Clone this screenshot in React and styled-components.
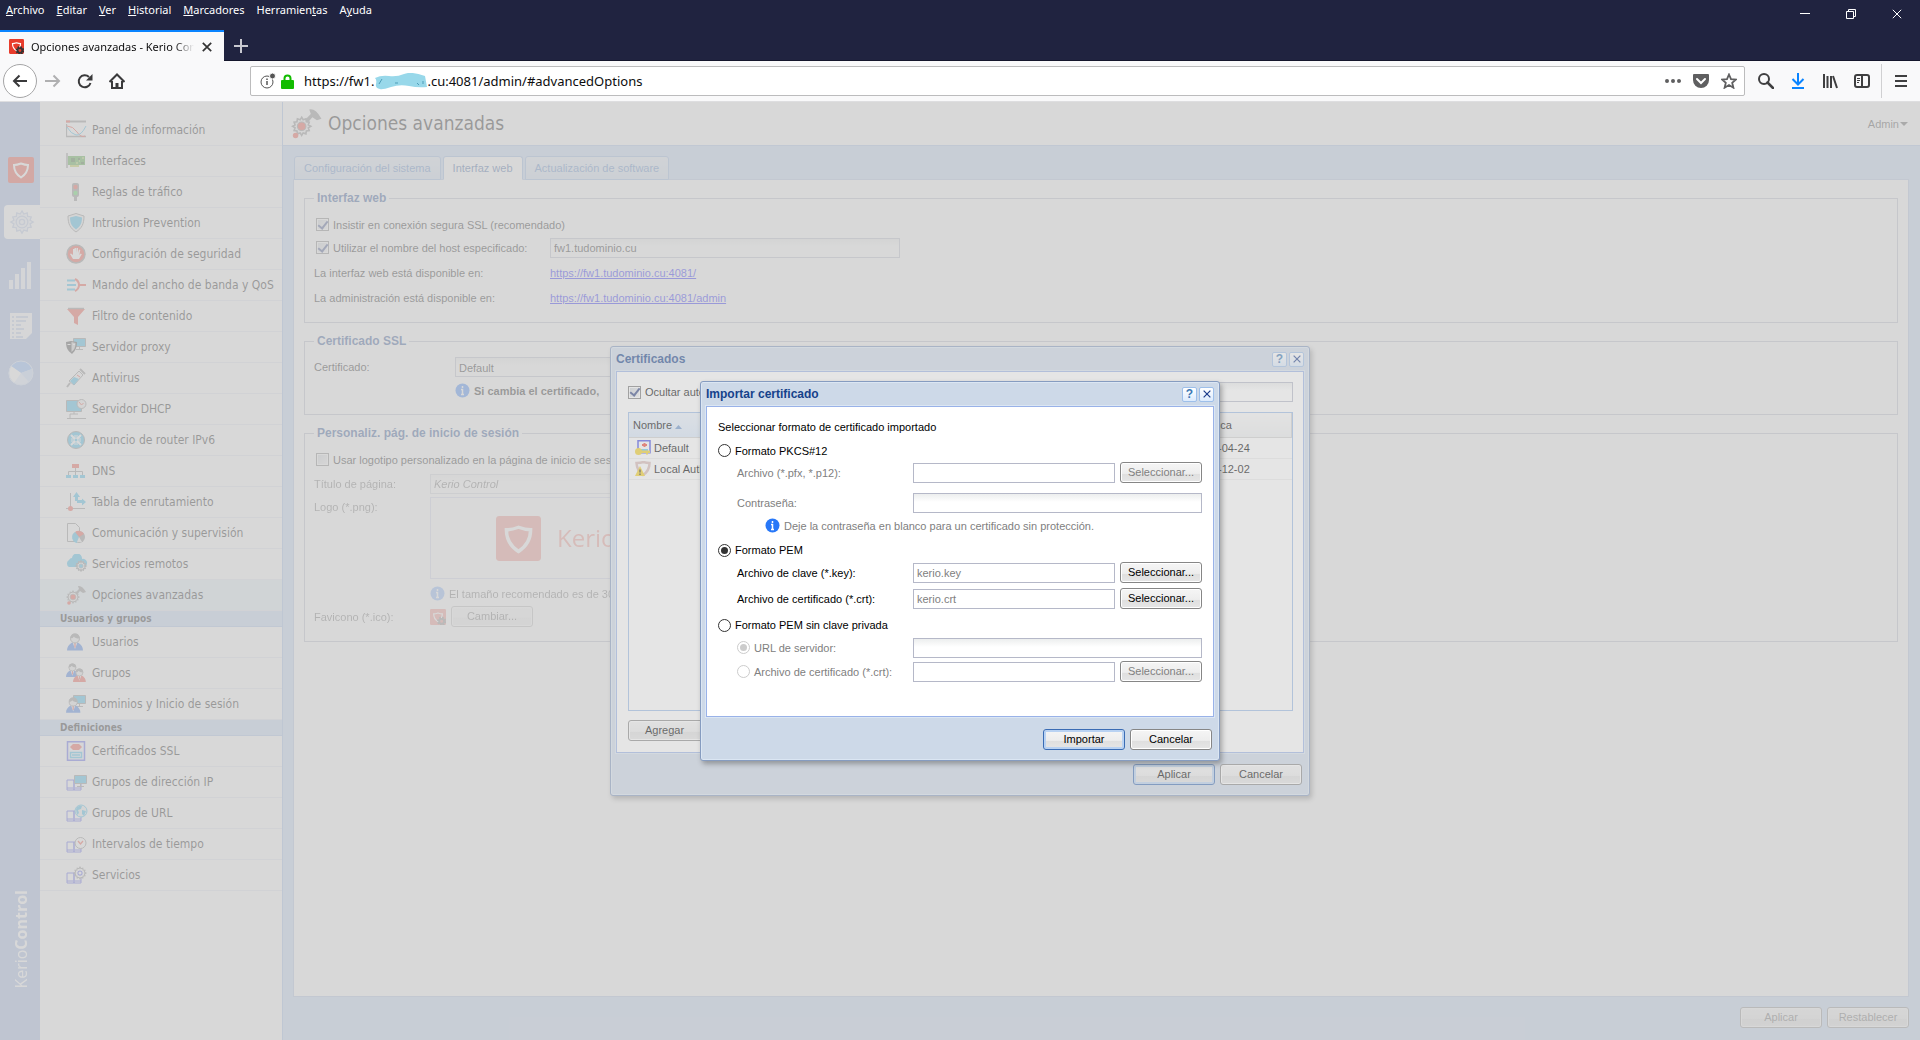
import styled, { createGlobalStyle, css } from 'styled-components'

const UI = `"Liberation Sans", Arial, sans-serif`
const NAV = `"DejaVu Sans Condensed", "DejaVu Sans", sans-serif`
const CHROME = `"Noto Sans", "Open Sans", sans-serif`

const GlobalStyle = createGlobalStyle`
    * { box-sizing: border-box; }
    body { margin: 0; font-family: ${UI}; font-size: 11px; color: #000; }
    button, input, select { font: inherit; color: inherit; margin: 0; }
`

const Window = styled.div`
    display: flex;
    flex-direction: column;
    height: 100vh;
    overflow: hidden;
`

/* browser chrome */

const TitleBar = styled.header`
    background: #202340;
    color: #fff;
    display: flex;
    justify-content: space-between;
    height: 61px;
    font-family: ${CHROME};
    font-size: 11px;
    border-bottom: 1px solid #14162c;
`

const TitleLeft = styled.div`
    display: flex;
    flex-direction: column;
    justify-content: space-between;
`

const MenuBar = styled.nav`
    display: flex;
    gap: 12px;
    padding-left: 6px;
    line-height: 20px;
`

const MenuItem = styled.button`
    background: none;
    border: 0;
    padding: 0;
`

const TabStrip = styled.div`
    display: flex;
    align-items: stretch;
    height: 31px;
    margin-bottom: -1px;
`

const BrowserTab = styled.div`
    background: #f9f9fa;
    color: #0c0c0d;
    border-top: 2px solid #0a84ff;
    width: 224px;
    padding: 0 11px 0 9px;
    display: flex;
    align-items: center;
    gap: 7px;
`

const TabTitle = styled.span`
    flex: 1;
    overflow: hidden;
    white-space: nowrap;
    mask-image: linear-gradient(to right, #000 88%, transparent);
`

const PlainButton = styled.button`
    background: none;
    border: 0;
    padding: 0;
    display: flex;
    align-items: center;
    justify-content: center;
    width: ${p => p.$w || 16}px;
    flex-shrink: 0;
`

const WindowControls = styled.div`
    display: flex;
    height: 28px;
`

const ToolBar = styled.div`
    background: #f9f9fa;
    border-bottom: 1px solid #dedee0;
    display: flex;
    align-items: center;
    height: 41px;
    padding: 0 3px;
`

const BackButton = styled(PlainButton)`
    width: 34px;
    height: 34px;
    border: 1px solid #a5a5a6;
    border-radius: 50%;
    background: #fff;
`

const UrlBar = styled.div`
    display: flex;
    align-items: center;
    flex: 1;
    height: 30px;
    margin-left: 117px;
    padding: 0 1px 0 9px;
    border: 1px solid #bcbcbd;
    border-radius: 2px;
    background: #fff;
`

const UrlText = styled.div`
    display: flex;
    align-items: center;
    flex: 1;
    margin-left: 10px;
    font-family: ${CHROME};
    font-size: 13px;
    color: #0c0c0d;
`

const ToolDivider = styled.span`
    width: 1px;
    height: 34px;
    background: #d0d0d2;
    margin: 0 3px 0 8px;
`

/* application */

const AppArea = styled.div`
    position: relative;
    display: flex;
    flex: 1;
    min-height: 0;
    background: #bfd5f5;
`

const Layer = styled.div`
    position: absolute;
    inset: 0;
    display: flex;
    align-items: center;
    justify-content: center;
    background: ${p => p.$dim ? 'rgba(204, 204, 204, 0.5)' : 'none'};
`

const Rail = styled.aside`
    width: 40px;
    background: #98b2e2;
    display: flex;
    flex-direction: column;
    justify-content: space-between;
`

const RailIcons = styled.div`
    display: flex;
    flex-direction: column;
    padding-top: 43px;
`

const RailButton = styled.button`
    border: 0;
    padding: 0;
    height: ${p => p.$h}px;
    margin-left: 2px;
    display: flex;
    align-items: center;
    justify-content: center;
    background: none;
    ${p => p.$active && css`
        background: #fff;
        border-radius: 4px 0 0 4px;
        height: 34px;
        margin: 10px 0 9px 4px;
    `}
`

const Brand = styled.div`
    writing-mode: vertical-rl;
    transform: rotate(180deg);
    align-self: flex-end;
    font-family: "Open Sans", sans-serif;
    font-size: 16px;
    line-height: 20px;
    color: #fff;
    padding-top: 51px;
    margin-right: 9px;
    b { font-weight: 700; }
`

const SideBar = styled.nav`
    width: 243px;
    background: #fff;
    border-right: 1px solid #99bbe8;
    padding-top: 13px;
    font-family: ${NAV};
    font-size: 12px;
    overflow: hidden;
`

const SideHeading = styled.h3`
    margin: 0;
    height: 16px;
    line-height: 15px;
    padding-left: 20px;
    background: #bfd5f5;
    border-bottom: 1px solid #a3bfe8;
    font-size: 10px;
`

const SideLink = styled.a`
    display: flex;
    align-items: center;
    gap: 4px;
    height: 31px;
    padding-left: 26px;
    border-bottom: 1px solid #e0e6f0;
    color: #000;
    text-decoration: none;
    white-space: nowrap;
    background: ${p => p.$active ? '#dcecf4' : 'none'};
`

const Main = styled.main`
    flex: 1;
    display: flex;
    flex-direction: column;
    min-width: 0;
    color: #000;
`

const PageHeader = styled.div`
    display: flex;
    align-items: center;
    gap: 5px;
    height: 44px;
    background: #fff;
    border-bottom: 1px solid #a3bfe8;
    padding: 0 12px 0 8px;
`

const PageTitle = styled.h1`
    flex: 1;
    margin: 0;
    font-family: ${NAV};
    font-size: 19px;
    line-height: 42px;
    font-weight: normal;
    height: 44px;
`

const AdminMenu = styled(PlainButton)`
    width: auto;
    gap: 1px;
    color: #333;
`

const TabRow = styled.div`
    display: flex;
    gap: 2px;
    padding: 10px 11px 0;
`

const PageTab = styled.button`
    height: 24px;
    padding: 0 9px;
    border: 1px solid #8db2e3;
    border-bottom-color: ${p => p.$active ? '#fff' : '#8db2e3'};
    border-radius: 3px 3px 0 0;
    background: ${p => p.$active ? '#fff' : 'linear-gradient(#dfe9f7, #ccdcf0)'};
    color: ${p => p.$active ? '#2a5599' : '#4a7cc4'};
    margin-bottom: -1px;
    position: relative;
`

const Panel = styled.div`
    flex: 1;
    margin: 0 11px 0 10px;
    padding: 10px;
    background: #fff;
    border: 1px solid #a9bfe0;
`

const FieldSet = styled.fieldset`
    margin: 0 0 10px;
    padding: ${p => p.$top}px 9px ${p => p.$bottom}px;
    border: 1px solid #b5b8c8;
    min-width: 0;
`

const Legend = styled.legend`
    color: #15428b;
    font-weight: bold;
    font-size: 12px;
    line-height: 16px;
    padding: 0 3px;
`

const Line = styled.div`
    display: flex;
    align-items: ${p => p.$start ? 'flex-start' : 'center'};
    min-height: ${p => p.$h || 21}px;
    margin-top: ${p => p.$gap || 0}px;
    padding-left: ${p => p.$indent || 0}px;
    line-height: 20px;
    opacity: ${p => p.$off ? 0.6 : 1};
`

const LabelCell = styled.label`
    display: flex;
    align-items: center;
    gap: 4px;
    width: ${p => p.$w ? `${p.$w}px` : 'auto'};
    flex-shrink: 0;
    white-space: nowrap;
`

const FieldPair = styled.div`
    display: flex;
    align-items: center;
    gap: 5px;
    flex: 1;
    min-width: 0;
`

const Muted = styled.span`
    color: #808080;
`

const Check = styled.input.attrs({ type: 'checkbox' })`
    appearance: none;
    width: 13px;
    height: 13px;
    border: 1px solid #777;
    box-shadow: inset 0 0 0 1px #fff;
    background: linear-gradient(135deg, #c9cfd6, #f6f6f6);
    display: grid;
    place-items: center;
    &:checked::after {
        content: '';
        width: 4px;
        height: 8px;
        border: solid #2b3f80;
        border-width: 0 2px 2px 0;
        transform: rotate(38deg);
        margin-top: -2px;
    }
`

const Radio = styled.input.attrs({ type: 'radio' })`
    appearance: none;
    width: 13px;
    height: 13px;
    border: 1px solid #333;
    border-radius: 50%;
    background: #fff;
    display: grid;
    place-items: center;
    &:checked::after {
        content: '';
        width: 7px;
        height: 7px;
        border-radius: 50%;
        background: #333;
    }
    &:disabled { border-color: #ccc; }
    &:disabled:checked::after { background: #ccc; }
`

const fieldBox = css`
    appearance: none;
    height: 20px;
    border: 1px solid #b5b8c8;
    border-radius: 0;
    padding: 0 3px;
    outline: 0;
    background: ${p => p.$flat ? '#fff' : 'linear-gradient(#eceeee, #fff 8px)'};
`

const TextBox = styled.input`
    ${fieldBox}
    width: ${p => p.$w ? `${p.$w}px` : 'auto'};
    flex: ${p => p.$w ? 'none' : 1};
    min-width: 0;
    color: ${p => p.$muted ? '#808080' : '#000'};
    font-style: ${p => p.$italic ? 'italic' : 'normal'};
`

const SelectBox = styled.select`
    ${fieldBox}
    width: 350px;
    opacity: 1;
`

const Link = styled.a`
    color: #00f;
`

const LogoBox = styled.div`
    width: 350px;
    height: 82px;
    border: 1px solid #b5b8e0;
    display: flex;
    align-items: center;
    gap: 16px;
    padding-left: 65px;
    color: #f04030;
    font-family: "Open Sans", sans-serif;
    font-size: 24px;
`

const Button = styled.button`
    min-width: 82px;
    height: 21px;
    line-height: 17px;
    padding: ${p => p.$menu ? '0 6px 0 16px' : '0 6px'};
    flex-shrink: 0;
    border: 1px solid ${p => p.$primary ? '#3a6cb4' : '#868686'};
    border-radius: 3px;
    background: linear-gradient(#f5f5f5, #ededed 55%, #dfdfdf 58%, #e6e6e6);
    box-shadow: inset 0 0 0 ${p => p.$primary ? '2px #b9d2f2' : '1px #fff'};
    white-space: nowrap;
    &:disabled { color: ${p => p.$ink || '#808080'}; }
    svg { margin: 0 0 2px 16px; }
`

const ButtonBar = styled.footer`
    display: flex;
    justify-content: flex-end;
    gap: 5px;
    padding: ${p => p.$pad};
`

const Dialog = styled.section`
    width: ${p => p.$w}px;
    background: #cdd9e8;
    border: 1px solid #869cc0;
    border-radius: 3px;
    box-shadow: 2px 3px 5px rgba(60, 60, 60, 0.4), inset 0 0 0 1px #dbe6f3;
    padding: 0 5px;
`

const DialogHead = styled.div`
    display: flex;
    align-items: center;
    gap: 2px;
    height: 24px;
`

const DialogTitle = styled.h2`
    flex: 1;
    margin: 0;
    color: #15428b;
    font-size: 12px;
`

const ToolButton = styled.button`
    width: 15px;
    height: 15px;
    padding: 0;
    border: 1px solid #9dbfea;
    border-radius: 2px;
    background: linear-gradient(#fff, #dcebfd);
    display: grid;
    place-items: center;
    color: #3c78b4;
    font-size: 12px;
    font-weight: bold;
    line-height: 12px;
`

const DialogBody = styled.div`
    background: #fff;
    border: 1px solid #99b2e8;
    outline: 1px solid #dbe6f3;
    padding: ${p => p.$pad};
`

const GridBox = styled.div`
    height: 299px;
    margin: 10px 0 9px;
    border: 1px solid #99bbe8;
`

const Grid = styled.table`
    width: 100%;
    border-collapse: collapse;
    table-layout: fixed;
    th, td {
        text-align: left;
        font-weight: normal;
        padding: 0 4px;
        white-space: nowrap;
    }
    th {
        height: 24px;
        background: linear-gradient(#f9f9f9, #eceeef);
        border-bottom: 1px solid #d0d0d0;
        border-right: 1px solid #d0d0d0;
    }
    th:first-child { background: linear-gradient(#ebf3fd, #d9e8fb); }
    td { height: 21px; border-bottom: 1px solid #ededed; }
    td:first-child { padding-left: 6px; }
`

const CellIcon = styled.span`
    display: flex;
    align-items: center;
    gap: 3px;
`

const RED = '#f04030'
const BLUE = '#28b4e8'
const GRAY = '#808080'
const BOOK = '#4048e8'

const Svg = ({ size = 16, w, h, vb, children, ...rest }) => (
    <svg width={w || size} height={h || size} viewBox={vb || `0 0 ${w || size} ${h || size}`} fill="none" aria-hidden="true" {...rest}>{children}</svg>
)

const LockIcon = styled.svg`
    margin-left: 5px;
    flex-shrink: 0;
`

const GEAR = 'M10 1.500l1.400 2.400 2.600-.900.400 2.700 2.700.400-.900 2.600 2.400 1.300-2.400 1.400.900 2.600-2.700.400-.400 2.700-2.600-.900L10 18.600l-1.400-2.400-2.600.900-.400-2.700-2.700-.400.900-2.600L1.400 10l2.400-1.300-.900-2.600 2.700-.400.400-2.700 2.600.900z'

const BookShape = () => <path d="M1 8h7v10H1zM8 8h7v10H8zM1 16h6M9 16h6" stroke={BOOK} />
const MonitorShape = ({ x = 8, y = 1 }) => <g transform={`translate(${x} ${y})`}><path d="M.5.5h12v8H.5z" fill={BLUE} stroke={GRAY} /><path d="M6.500 9v2M3 11.500h7" stroke={GRAY} /></g>
const PersonShape = ({ x = 0, y = 0, color = '#2468e0' }) => (
    <g transform={`translate(${x} ${y})`}>
        <path d="M0 17.500q0-5 5-8h6q5 3 5 8z" fill={color} />
        <path d="M5.500 9l2.500 7 2.500-7z" fill="#fff" /><path d="M8 9.500v5" stroke={RED} strokeWidth="1.300" />
        <circle cx="8" cy="5.500" r="4.500" fill="#e8e8e8" stroke={GRAY} />
        <path d="M3.500 5.500Q3.500.500 8 .500t4.500 5Q8 5.500 7 3.500 6 5.500 3.500 5.500z" fill={GRAY} />
    </g>
)

const icons = {
    panel: <><path d="M.5 4v12.500h19.500" stroke={GRAY} strokeWidth="1.300" /><path d="M0 1.500h20" stroke={GRAY} strokeWidth="2" /><path d="M0 1.500h4" stroke={RED} strokeWidth="2" /><path d="M1 6q6 0 10 6t8 4" stroke={RED} /><path d="M1 7q4 7 9 8t10-9" stroke={BLUE} /></>,
    interfaces: <><path d="M1 2v15" stroke={GRAY} strokeWidth="1.500" /><path d="M2 5h17v9H2z" fill="#3c9c28" /><path d="M4 14h9v2H4z" fill="#b8c838" /><path d="M5 7h4v4H5zM12 7h2v2h-2zM15 11h3v2h-3z" fill="#245c18" /><path d="M13 10h1M16 7h2M10 12h2" stroke="#e8e868" /></>,
    traffic: <><rect x="6" y="1" width="7" height="14" rx="2" fill={GRAY} /><path d="M9.500 15v4" stroke={GRAY} strokeWidth="3" /><circle cx="9.500" cy="5" r="2.200" fill={RED} /><circle cx="9.500" cy="11" r="2.200" fill="#40d848" /></>,
    shield: <><path d="M10 .500l8 2.500c0 8-2 12-8 16C4 15 2 11 2 3z" fill="#eee" stroke={GRAY} /><path d="M10 3l6 1.500c0 6-2 9-6 12-4-3-6-6-6-12z" fill={BLUE} /></>,
    hand: <><circle cx="10" cy="10" r="9" fill={RED} stroke={GRAY} strokeWidth="1.500" /><path d="M7 15l-3-5 1-.6L7 11V5h1.500v4V4H10v5l.5-5H12v5l1-3.500 1.300.5-1 5 1.500-1.500 1 .8L13 15z" fill="#fff" /></>,
    qos: <><path d="M1 5.500h8M1 10h9M1 14.500h8" stroke={BLUE} strokeWidth="2" /><path d="M9 4q4 2 4 6t-4 6M13 10h7" stroke={RED} strokeWidth="2" /></>,
    filter: <><path d="M1 3h18l-7 8v8l-4-2v-6z" fill={RED} /><path d="M2 2.500h16" stroke={GRAY} strokeWidth="1.500" /></>,
    proxy: <><MonitorShape x={7} y={1} /><path d="M0 5l5-1 6 1c0 6-2 9-5 12-4-3-6-6-6-12z" fill="#333" /><path d="M5.500 5l4 1c0 4-1 7-4 9z" fill="#ccc" /><path d="M1.500 7.500h3M7 7.500h2" stroke="#fff" /></>,
    antivirus: <><path d="M13 3l4 4-9 10-5-4z" fill="#f4f4f4" stroke={GRAY} /><path d="M8 9l5 2-5 6-4-4z" fill={BLUE} /><path d="M14 1l5 5M4 15l-3 4" stroke={GRAY} strokeWidth="2" /><path d="M11 7l3 2" stroke={RED} /></>,
    dhcp: <><path d="M.5 1.500h15v11H.5z" fill={BLUE} stroke={GRAY} /><path d="M8 13v2M4 15h8M4 15v4M1 19.500h19" stroke={GRAY} /><circle cx="15.500" cy="5" r="4.500" fill="#eee" stroke={GRAY} /><path d="M13 3l2.500 3 2-2" stroke={RED} /></>,
    router: <><circle cx="10" cy="10" r="8.500" fill={BLUE} stroke={GRAY} /><path d="M5 5l4 4M15 5l-4 4M5 15l4-4M15 15l-4-4" stroke="#fff" strokeWidth="2" /><path d="M5 9h4V5M15 9h-4V5M5 11h4v4M15 11h-4v4" stroke="#fff" /></>,
    dns: <><path d="M9.500 7v7M2.500 14v-3.500h14V14" stroke={GRAY} /><path d="M6 3h7v4H6z" fill={RED} /><path d="M0 14h5v3H0zM7 14h5v3H7zM14 14h5v3h-5z" fill={BLUE} /></>,
    routing: <><path d="M4.500 1v16M0 16.500h19" stroke={GRAY} /><circle cx="4.500" cy="16.500" r="2.500" fill={RED} /><path d="M10.500 9V4M11 9.500h6" stroke={BLUE} strokeWidth="3" /><path d="M7 5l3.500-5L14 5zM16 6.500l4 3.500-4 3.500z" fill={BLUE} /></>,
    report: <><path d="M1.500.500h8l4 4v14h-12z" stroke={GRAY} fill="#fff" /><circle cx="13" cy="14" r="6" fill={GRAY} /><path d="M13 14l-4-5a6 6 0 0 1 9 2z" fill={RED} /><path d="M13 14l-2 6a6 6 0 0 1-2-11z" fill={BLUE} /><path d="M13 14l3 5h-5z" fill="#eee" /></>,
    cloud: <><path d="M3 13a4 4 0 0 1 0-7 4 4 0 0 1 3-2 5 5 0 0 1 10 1 4 4 0 0 1 2 8z" fill={BLUE} /><g transform="translate(9 6) scale(.6)"><path d={GEAR} fill="#eee" stroke={GRAY} strokeWidth="2" /><circle cx="10" cy="10" r="3.500" fill={BLUE} stroke={GRAY} /></g></>,
    advanced: <><path d="M12 1q4-1 8 6l-3 1-3-2-5 6-2-2 6-6z" fill={GRAY} /><g transform="translate(0 5) scale(.7)"><path d={GEAR} fill="#eee" stroke={GRAY} strokeWidth="1.500" /><circle cx="10" cy="10" r="4" fill={RED} stroke={GRAY} /></g><circle cx="3" cy="18" r="1.800" fill={RED} /></>,
    user: <PersonShape x={1} y={1} />,
    group: <><g transform="scale(.8)"><PersonShape x={0} y={0} /></g><g transform="translate(7 5) scale(.8)"><PersonShape color={RED} /></g></>,
    domain: <><MonitorShape x={7} y={1} /><g transform="translate(0 3) scale(.9)"><PersonShape /></g></>,
    ssl: <><path d="M1.500.750h17v18.500h-17z" stroke={BOOK} strokeWidth="1.500" fill="#f4f4ff" /><path d="M4 6l3-3h6l3 3-3 3H7z" fill={RED} /><path d="M4.500 11.500h11v5h-11zM6 14h8" stroke={BLUE} strokeWidth="1.500" /></>,
    ipgroup: <><BookShape /><MonitorShape x={8} y={3} /></>,
    urlgroup: <><BookShape /><circle cx="15" cy="8" r="6" fill="#eee" stroke={BLUE} /><path d="M10 6q2-4 6-3l-1 3-3 1 1 3-2 2zM16 7l4 1-2 5-2-2z" fill={BLUE} /></>,
    time: <><BookShape /><circle cx="14.500" cy="9" r="5.500" fill="#fff" stroke={GRAY} /><path d="M12 7l2.500 3 2.500-3" stroke={RED} strokeWidth="1.300" /></>,
    service: <><BookShape /><g transform="translate(7 1) scale(.7)"><path d={GEAR} fill="#fff" stroke={GRAY} strokeWidth="1.500" /><circle cx="10" cy="10" r="3" stroke={BOOK} strokeWidth="1.500" /></g></>,
}

const KerioIcon = ({ size, badge }) => (
    <Svg size={size} vb="0 0 26 26">
        <rect width="26" height="26" rx="2" fill="#e83c2c" />
        <path d="M13 6.500q4 1.500 7 1.500 0 8-7 12.500Q6 16 6 8q3 0 7-1.500z" stroke="#fff" strokeWidth="2" />
        {badge && <><circle cx="19" cy="20" r="5.500" stroke="#333" strokeWidth="4" strokeDasharray="2.500 1.800" /><circle cx="19" cy="20" r="4" stroke="#333" strokeWidth="3" /></>}
    </Svg>
)

const Info = ({ size = 15 }) => (
    <Svg size={size} vb="0 0 15 15">
        <circle cx="7.500" cy="7.500" r="7" fill="#2878f8" />
        <path d="M7.500 3v2M6 6.500h1.500V11M6 11.500h3" stroke="#fff" strokeWidth="1.500" />
    </Svg>
)

const Cross = ({ size = 8, color = '#1c3c8c', w = 1.5 }) => (
    <Svg size={size} vb="0 0 10 10"><path d="M.8.8l8.400 8.400M9.200.8L.8 9.200" stroke={color} strokeWidth={w} /></Svg>
)

const menus = [['', 'A', 'rchivo'], ['', 'E', 'ditar'], ['', 'V', 'er'], ['', 'H', 'istorial'], ['', 'M', 'arcadores'], ['Herramien', 't', 'as'], ['A', 'y', 'uda']]

const sections = [
    { items: [
        ['panel', 'Panel de información'], ['interfaces', 'Interfaces'], ['traffic', 'Reglas de tráfico'],
        ['shield', 'Intrusion Prevention'], ['hand', 'Configuración de seguridad'], ['qos', 'Mando del ancho de banda y QoS'],
        ['filter', 'Filtro de contenido'], ['proxy', 'Servidor proxy'], ['antivirus', 'Antivirus'], ['dhcp', 'Servidor DHCP'],
        ['router', 'Anuncio de router IPv6'], ['dns', 'DNS'], ['routing', 'Tabla de enrutamiento'],
        ['report', 'Comunicación y supervisión'], ['cloud', 'Servicios remotos'], ['advanced', 'Opciones avanzadas'],
    ] },
    { title: 'Usuarios y grupos', items: [['user', 'Usuarios'], ['group', 'Grupos'], ['domain', 'Dominios y Inicio de sesión']] },
    { title: 'Definiciones', items: [
        ['ssl', 'Certificados SSL'], ['ipgroup', 'Grupos de dirección IP'], ['urlgroup', 'Grupos de URL'],
        ['time', 'Intervalos de tiempo'], ['service', 'Servicios'],
    ] },
]

function Browser() {
    return <>
        <TitleBar>
            <TitleLeft>
                <MenuBar>
                    {menus.map(([a, key, b]) => <MenuItem key={a + key + b}>{a}<u>{key}</u>{b}</MenuItem>)}
                </MenuBar>
                <TabStrip>
                    <BrowserTab>
                        <KerioIcon size={15} badge />
                        <TabTitle>Opciones avanzadas - Kerio Control</TabTitle>
                        <PlainButton $w={12} aria-label="Cerrar pestaña"><Cross size={10} color="#333" w={1.7} /></PlainButton>
                    </BrowserTab>
                    <PlainButton $w={34} aria-label="Nueva pestaña"><Svg size={14}><path d="M7 0v14M0 7h14" stroke="#c8c8d0" strokeWidth="2" /></Svg></PlainButton>
                </TabStrip>
            </TitleLeft>
            <WindowControls>
                <PlainButton $w={46} aria-label="Minimizar"><Svg size={10}><path d="M0 4.500h10" stroke="#fff" /></Svg></PlainButton>
                <PlainButton $w={46} aria-label="Restaurar"><Svg size={10}><path d="M.5 2.500h7v7h-7zM2.500 2.500v-2h7v7h-2" stroke="#fff" /></Svg></PlainButton>
                <PlainButton $w={46} aria-label="Cerrar"><Cross size={10} color="#fff" w={1} /></PlainButton>
            </WindowControls>
        </TitleBar>
        <ToolBar>
            <BackButton aria-label="Atrás"><Svg size={16}><path d="M15 8H2M7.500 2.500L2 8l5.500 5.500" stroke="#3a3a3b" strokeWidth="2" /></Svg></BackButton>
            <PlainButton $w={32} aria-label="Adelante"><Svg size={16}><path d="M0 8h14M8.500 2.500L14 8l-5.500 5.500" stroke="#b0b0b1" strokeWidth="2" /></Svg></PlainButton>
            <PlainButton $w={32} aria-label="Recargar"><Svg size={16}><path d="M13.500 10A6 6 0 1 1 12 4" stroke="#3a3a3b" strokeWidth="2" /><path d="M15.500 1v6.500H9z" fill="#3a3a3b" /></Svg></PlainButton>
            <PlainButton $w={32} aria-label="Inicio"><Svg size={16}><path d="M.5 9L8 1.500 15.500 9M3 8v7h10V8" stroke="#3a3a3b" strokeWidth="2" /><path d="M6.500 10h3v5h-3z" fill="#3a3a3b" /></Svg></PlainButton>
            <UrlBar>
                <Svg size={16}><circle cx="7" cy="9" r="6" stroke="#555" /><path d="M7 8v4M7 5.500v1.500" stroke="#555" strokeWidth="1.500" /><circle cx="12.500" cy="3" r="3" fill="#555" stroke="#fff" /></Svg>
                <LockIcon width="13" height="15" fill="none"><path d="M3.500 7V4.500a3 3 0 0 1 6 0V7" stroke="#12bc00" strokeWidth="2" /><rect y="6" width="13" height="9" rx="1" fill="#12bc00" /></LockIcon>
                <UrlText>
                    https://fw1.
                    <Svg w={53} h={17}><path d="M1 5q6-3 14-2T30 1t21 2l2 11q-9 1-18-1t-18 1-11 2q-5-1-4-5t-1-6z" fill="#98d8ea" /><path d="M5 11l3-5M21 10h3M43 10l2 2M49 8v3" stroke="#4f9db8" /></Svg>
                    .cu:4081/admin/#advancedOptions
                </UrlText>
                <PlainButton $w={28} aria-label="Acciones de página"><Svg size={16}><path d="M2 8h.010M8 8h.010M14 8h.010" stroke="#5f5f60" strokeWidth="4" strokeLinecap="round" /></Svg></PlainButton>
                <PlainButton $w={28} aria-label="Guardar en Pocket"><Svg size={16}><path d="M0 2q0-1 1-1h14q1 0 1 1v5a8 8 0 0 1-16 0z" fill="#5f5f60" /><path d="M4 6l4 4 4-4" stroke="#fff" strokeWidth="2" strokeLinecap="round" /></Svg></PlainButton>
                <PlainButton $w={28} aria-label="Añadir marcador"><Svg size={16}><path d="M8 1.500l2 4.600 5 .4-3.800 3.300 1.200 4.900L8 12.100l-4.400 2.600 1.200-4.900L1 6.500l5-.4z" stroke="#5f5f60" strokeWidth="1.800" /></Svg></PlainButton>
            </UrlBar>
            <PlainButton $w={42} aria-label="Buscar"><Svg size={16}><circle cx="6" cy="6" r="5" stroke="#3f3f40" strokeWidth="2" /><path d="M9.500 9.500L15 15" stroke="#3f3f40" strokeWidth="2.500" strokeLinecap="round" /></Svg></PlainButton>
            <PlainButton $w={22} aria-label="Descargas"><Svg size={16}><path d="M8 0v11M2.500 6L8 11.500 13.500 6M2 15h12" stroke="#0a84ff" strokeWidth="2" /></Svg></PlainButton>
            <PlainButton $w={42} aria-label="Catálogo"><Svg size={16}><path d="M2 1v14M5.500 3v12M9 3v12M11 3l4 12" stroke="#3f3f40" strokeWidth="2" /></Svg></PlainButton>
            <PlainButton $w={22} aria-label="Barra lateral"><Svg size={16}><rect x="1" y="2" width="14" height="12" rx="2" stroke="#3f3f40" strokeWidth="2" /><path d="M8 2v12" stroke="#3f3f40" strokeWidth="2" /><path d="M3 5.500h3M3 7.500h3M3 9.500h2" stroke="#3f3f40" /></Svg></PlainButton>
            <ToolDivider />
            <PlainButton $w={32} aria-label="Menú"><Svg size={14}><path d="M1 2h12M1 7h12M1 12h12" stroke="#3f3f40" strokeWidth="2" /></Svg></PlainButton>
        </ToolBar>
    </>
}

function Navigation() {
    return <>
        <Rail>
            <RailIcons>
                <RailButton $h={50} aria-label="Kerio Control"><KerioIcon size={26} /></RailButton>
                <RailButton $active aria-label="Configuración"><Svg size={26} vb="0 0 20 20"><path d={GEAR} fill="#eef2fa" stroke="#b4c4e4" /><circle cx="10" cy="10" r="4.500" stroke="#b4c4e4" /><circle cx="10" cy="10" r="2" stroke="#b4c4e4" /></Svg></RailButton>
                <RailButton $h={53} aria-label="Estado"><Svg w={24} h={28}><path d="M0 19h4v9H0zM6 13h4v15H6zM12 7h4v21h-4zM18 1h4v27h-4z" fill="#eef2fa" /></Svg></RailButton>
                <RailButton $h={49} aria-label="Registros"><Svg w={24} h={28}><path d="M1 1h22v20l-6 6H1z" fill="#f4f6fb" /><path d="M3 5h2M7 5h12M3 9h2M7 9h10M3 13h2M7 13h5M3 17h2M7 17h8M3 21h2M7 21h5M3 25h2M7 25h7" stroke="#b4c4e4" strokeWidth="2" /></Svg></RailButton>
                <RailButton $h={46} aria-label="Informes"><Svg size={26}><circle cx="13" cy="13" r="12" fill="#dce8fc" /><path d="M13 13L3 6a12 12 0 0 1 21 3z" fill="#7cb0ff" /><path d="M13 13l11-4a12 12 0 0 1-3 13z" fill="#c0d8fc" /><path d="M13 13L3 6a12 12 0 0 0 3 17z" fill="#fff" /><circle cx="13" cy="13" r="12" stroke="#d0e0fa" /></Svg></RailButton>
            </RailIcons>
            <Brand>Kerio<b>Control</b></Brand>
        </Rail>
        <SideBar>
            {sections.map(({ title, items }) => <div key={items[0][0]}>
                {title && <SideHeading>{title}</SideHeading>}
                {items.map(([icon, text]) => <SideLink key={icon} href={`#${icon}`} $active={icon === 'advanced'}>
                    <Svg w={22} h={20}>{icons[icon]}</Svg>{text}
                </SideLink>)}
            </div>)}
        </SideBar>
    </>
}

function AdvancedOptions() {
    return <Main>
        <PageHeader>
            <Svg size={32} vb="0 0 21 21">{icons.advanced}</Svg>
            <PageTitle>Opciones avanzadas</PageTitle>
            <AdminMenu>Admin<Svg w={8} h={4}><path d="M0 0h8L4 4z" fill="#444" /></Svg></AdminMenu>
        </PageHeader>
        <TabRow>
            <PageTab>Configuración del sistema</PageTab>
            <PageTab $active>Interfaz web</PageTab>
            <PageTab>Actualización de software</PageTab>
        </TabRow>
        <Panel>
            <FieldSet $top={8} $bottom={14}>
                <Legend>Interfaz web</Legend>
                <Line $indent={2}><LabelCell><Check defaultChecked />Insistir en conexión segura SSL (recomendado)</LabelCell></Line>
                <Line $gap={2} $indent={2}>
                    <LabelCell $w={234}><Check defaultChecked />Utilizar el nombre del host especificado:</LabelCell>
                    <TextBox $w={350} defaultValue="fw1.tudominio.cu" aria-label="Nombre del host" />
                </Line>
                <Line $gap={4}><LabelCell as="span" $w={236}>La interfaz web está disponible en:</LabelCell><Link href="https://fw1.tudominio.cu:4081/">https://fw1.tudominio.cu:4081/</Link></Line>
                <Line $gap={4}><LabelCell as="span" $w={236}>La administración está disponible en:</LabelCell><Link href="https://fw1.tudominio.cu:4081/admin">https://fw1.tudominio.cu:4081/admin</Link></Line>
            </FieldSet>
            <FieldSet $top={7} $bottom={13}>
                <Legend>Certificado SSL</Legend>
                <Line><LabelCell $w={141} htmlFor="cert">Certificado:</LabelCell><SelectBox id="cert"><option>Default</option></SelectBox></Line>
                <Line $gap={3} $indent={141}><LabelCell as="b"><Info />Si cambia el certificado,</LabelCell></Line>
            </FieldSet>
            <FieldSet $top={8} $bottom={14}>
                <Legend>Personaliz. pág. de inicio de sesión</Legend>
                <Line $indent={2}><LabelCell><Check />Usar logotipo personalizado en la página de inicio de sesión</LabelCell></Line>
                <Line $off $gap={3}><LabelCell $w={116} htmlFor="title">Título de página:</LabelCell><TextBox id="title" $w={350} $italic defaultValue="Kerio Control" disabled /></Line>
                <Line $off $gap={3} $start>
                    <LabelCell as="span" $w={116}>Logo (*.png):</LabelCell>
                    <LogoBox><KerioIcon size={45} /><span>Kerio</span></LogoBox>
                </Line>
                <Line $off $gap={4} $indent={116}><LabelCell as="span"><Info />El tamaño recomendado es de 300 x 80</LabelCell></Line>
                <Line $off $gap={2}><LabelCell as="span" $w={116}>Favicono (*.ico):</LabelCell><FieldPair><KerioIcon size={16} badge /><Button aria-disabled="true">Cambiar...</Button></FieldPair></Line>
            </FieldSet>
        </Panel>
        <ButtonBar $pad="10px 11px 12px"><Button disabled $ink="#555">Aplicar</Button><Button disabled $ink="#555">Restablecer</Button></ButtonBar>
    </Main>
}

const DialogTop = ({ children }) => <DialogHead>
    <DialogTitle>{children}</DialogTitle>
    <ToolButton aria-label="Ayuda">?</ToolButton>
    <ToolButton aria-label="Cerrar"><Cross /></ToolButton>
</DialogHead>

function CertificatesDialog() {
    return <Dialog $w={700}>
        <DialogTop>Certificados</DialogTop>
        <DialogBody $pad="10px 10px 11px 11px">
            <Line $h={20}>
                <LabelCell $w={300}><Check defaultChecked />Ocultar autoridades</LabelCell>
                <TextBox aria-label="Filtro" />
            </Line>
            <GridBox>
                <Grid>
                    <colgroup><col /><col width="102" /></colgroup>
                    <thead><tr>
                        <th>Nombre <Svg w={7} h={4}><path d="M0 4h7L3.500 0z" fill="#6a94cc" /></Svg></th>
                        <th>Caduca</th>
                    </tr></thead>
                    <tbody>
                        <tr>
                            <td><CellIcon><Svg size={16}><path d="M3 .750h12v12H3z" fill="#fff" stroke={BOOK} strokeWidth="1.500" /><path d="M7 5h5M9.500 3v4" stroke={RED} strokeWidth="2" /><path d="M6 10h7" stroke={BLUE} strokeWidth="1.500" /><circle cx="3.500" cy="11.500" r="3.500" fill="#f4d020" /><path d="M6 10.500h9v2.500h-2v1.500h-2V13H6z" fill="#f4d020" /></Svg>Default</CellIcon></td>
                            <td>2019-04-24</td>
                        </tr>
                        <tr>
                            <td><CellIcon><Svg size={16}><path d="M1.500 2q4 0 7-1 3 1 6 1 0 8-6.500 12Q2 10 1.500 2z" stroke="#d8b8b4" strokeWidth="2.500" fill="#fff" /><path d="M5 5l5 10H0z" fill="#f4d020" /><path d="M5 8.500v3M5 12.500v1.500" stroke="#222" strokeWidth="1.300" /></Svg>Local Authority</CellIcon></td>
                            <td>2025-12-02</td>
                        </tr>
                    </tbody>
                </Grid>
            </GridBox>
            <Button $menu>Agregar<Svg w={7} h={4}><path d="M0 0h7L3.500 4z" fill="#333" /></Svg></Button>
        </DialogBody>
        <ButtonBar $pad="11px 2px 10px"><Button $primary>Aplicar</Button><Button>Cancelar</Button></ButtonBar>
    </Dialog>
}

function ImportDialog() {
    return <Dialog $w={520}>
        <DialogTop>Importar certificado</DialogTop>
        <DialogBody $pad="8px 11px 34px">
            <Line $h={24}>Seleccionar formato de certificado importado</Line>
            <Line $h={23}><LabelCell><Radio name="format" />Formato PKCS#12</LabelCell></Line>
            <Line $indent={19}>
                <LabelCell $w={176} htmlFor="pfx"><Muted>Archivo (*.pfx, *.p12):</Muted></LabelCell>
                <FieldPair><TextBox id="pfx" $flat disabled /><Button disabled>Seleccionar...</Button></FieldPair>
            </Line>
            <Line $gap={9} $indent={19}>
                <LabelCell $w={176} htmlFor="pass"><Muted>Contraseña:</Muted></LabelCell>
                <FieldPair><TextBox id="pass" type="password" disabled /></FieldPair>
            </Line>
            <Line $h={25} $indent={47}><LabelCell as="span"><Info /><Muted>Deje la contraseña en blanco para un certificado sin protección.</Muted></LabelCell></Line>
            <Line $h={24}><LabelCell><Radio name="format" defaultChecked />Formato PEM</LabelCell></Line>
            <Line $indent={19}>
                <LabelCell $w={176} htmlFor="key">Archivo de clave (*.key):</LabelCell>
                <FieldPair><TextBox id="key" $flat $muted readOnly value="kerio.key" /><Button>Seleccionar...</Button></FieldPair>
            </Line>
            <Line $gap={5} $indent={19}>
                <LabelCell $w={176} htmlFor="crt">Archivo de certificado (*.crt):</LabelCell>
                <FieldPair><TextBox id="crt" $flat $muted readOnly value="kerio.crt" /><Button>Seleccionar...</Button></FieldPair>
            </Line>
            <Line $gap={4} $h={24}><LabelCell><Radio name="format" />Formato PEM sin clave privada</LabelCell></Line>
            <Line $indent={19}>
                <LabelCell $w={176}><Radio name="source" disabled defaultChecked /><Muted>URL de servidor:</Muted></LabelCell>
                <FieldPair><TextBox disabled aria-label="URL de servidor" /></FieldPair>
            </Line>
            <Line $gap={3} $indent={19}>
                <LabelCell $w={176}><Radio name="source" disabled /><Muted>Archivo de certificado (*.crt):</Muted></LabelCell>
                <FieldPair><TextBox $flat disabled aria-label="Archivo crt" /><Button disabled>Seleccionar...</Button></FieldPair>
            </Line>
        </DialogBody>
        <ButtonBar $pad="12px 2px 10px"><Button $primary>Importar</Button><Button>Cancelar</Button></ButtonBar>
    </Dialog>
}

export default function App() {
    return <Window>
        <GlobalStyle />
        <Browser />
        <AppArea>
            <Navigation />
            <AdvancedOptions />
            <Layer $dim><CertificatesDialog /></Layer>
            <Layer $dim><ImportDialog /></Layer>
        </AppArea>
    </Window>
}
